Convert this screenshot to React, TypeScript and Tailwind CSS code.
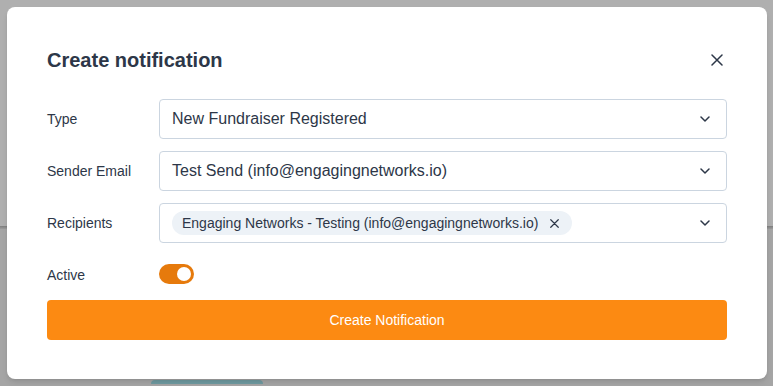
import React from "react";

type Row = {
  label: string;
  value?: string;
  chips?: string[];
};

const rows: Row[] = [
  {label: "Type", value: "New Fundraiser Registered"},
  {label: "Sender Email", value: "Test Send (info@engagingnetworks.io)"},
  {label: "Recipients", chips: ["Engaging Networks - Testing (info@engagingnetworks.io)"]},
];

function Chevron() {
  return (
    <svg width="10" height="6" viewBox="0 0 10 6" fill="none" className="shrink-0">
      <path d="M1 1l4 4 4-4" stroke="#2d3748" strokeWidth="1.5" strokeLinecap="round" strokeLinejoin="round" />
    </svg>
  );
}

function Close({size = 12, stroke = 1.5}: {size?: number; stroke?: number}) {
  return (
    <svg width={size} height={size} viewBox="0 0 12 12" fill="none" className="shrink-0">
      <path d="M1 1l10 10M11 1L1 11" stroke="#2d3748" strokeWidth={stroke} strokeLinecap="round" />
    </svg>
  );
}

function SelectBox({row}: {row: Row}) {
  return (
    <div className="flex h-10 flex-1 items-center justify-between rounded-[4px] border border-[#cbd5e0] bg-white pl-3 pr-4">
      {row.chips ? (
        <div className="flex items-center gap-2">
          {row.chips.map((c) => (
            <span
              key={c}
              className="flex h-6 items-center gap-[12px] rounded-full bg-[#edf2f7] pl-[10px] pr-[13px] text-[14px] text-[#2d3748]"
            >
              {c}
              <Close size={9} stroke={1.6} />
            </span>
          ))}
        </div>
      ) : (
        <span className="text-[16px] text-[#2d3748]">{row.value}</span>
      )}
      <Chevron />
    </div>
  );
}

export default function App() {
  return (
    <div className="relative h-[386px] w-[773px] overflow-hidden font-['Liberation_Sans',Arial,sans-serif]">
      <div className="h-[226px] bg-[#afafaf]" />
      <div className="h-[3px] bg-gradient-to-b from-[#7e7e7e] to-[#9c9c9c]" />
      <div className="h-[157px] bg-[#a5a5a5] pl-[151px] pt-[151px]">
        <div className="h-[4px] w-[112px] rounded-t-sm bg-[#6f9aa0]" />
      </div>

      <div className="absolute left-[7px] top-[7px] w-[760px] rounded-[8px] bg-white px-10 pb-[39px] pt-[39px] shadow-md">
        <div className="flex h-7 items-center justify-between">
          <h2 className="text-[20px] font-bold text-[#2d3748]">Create notification</h2>
          <button className="mr-[4px] flex items-center">
            <Close />
          </button>
        </div>

        <div className="mt-[25px] flex flex-col gap-3">
          {rows.map((row) => (
            <div key={row.label} className="flex items-center">
              <label className="w-[112px] text-[14px] text-[#2d3748]">{row.label}</label>
              <SelectBox row={row} />
            </div>
          ))}
        </div>

        <div className="mt-5 flex h-[22px] items-center">
          <span className="w-[112px] pt-[2px] text-[14px] text-[#2d3748]">Active</span>
          <div className="flex h-5 w-[35px] items-center justify-end rounded-full bg-[#e67a0c] px-[3px]">
            <div className="h-[14px] w-[14px] rounded-full bg-white" />
          </div>
        </div>

        <button className="mt-[15px] flex h-10 w-full items-center justify-center rounded-[4px] bg-[#fc8a12] text-[14px] text-white">
          Create Notification
        </button>
      </div>
    </div>
  );
}
